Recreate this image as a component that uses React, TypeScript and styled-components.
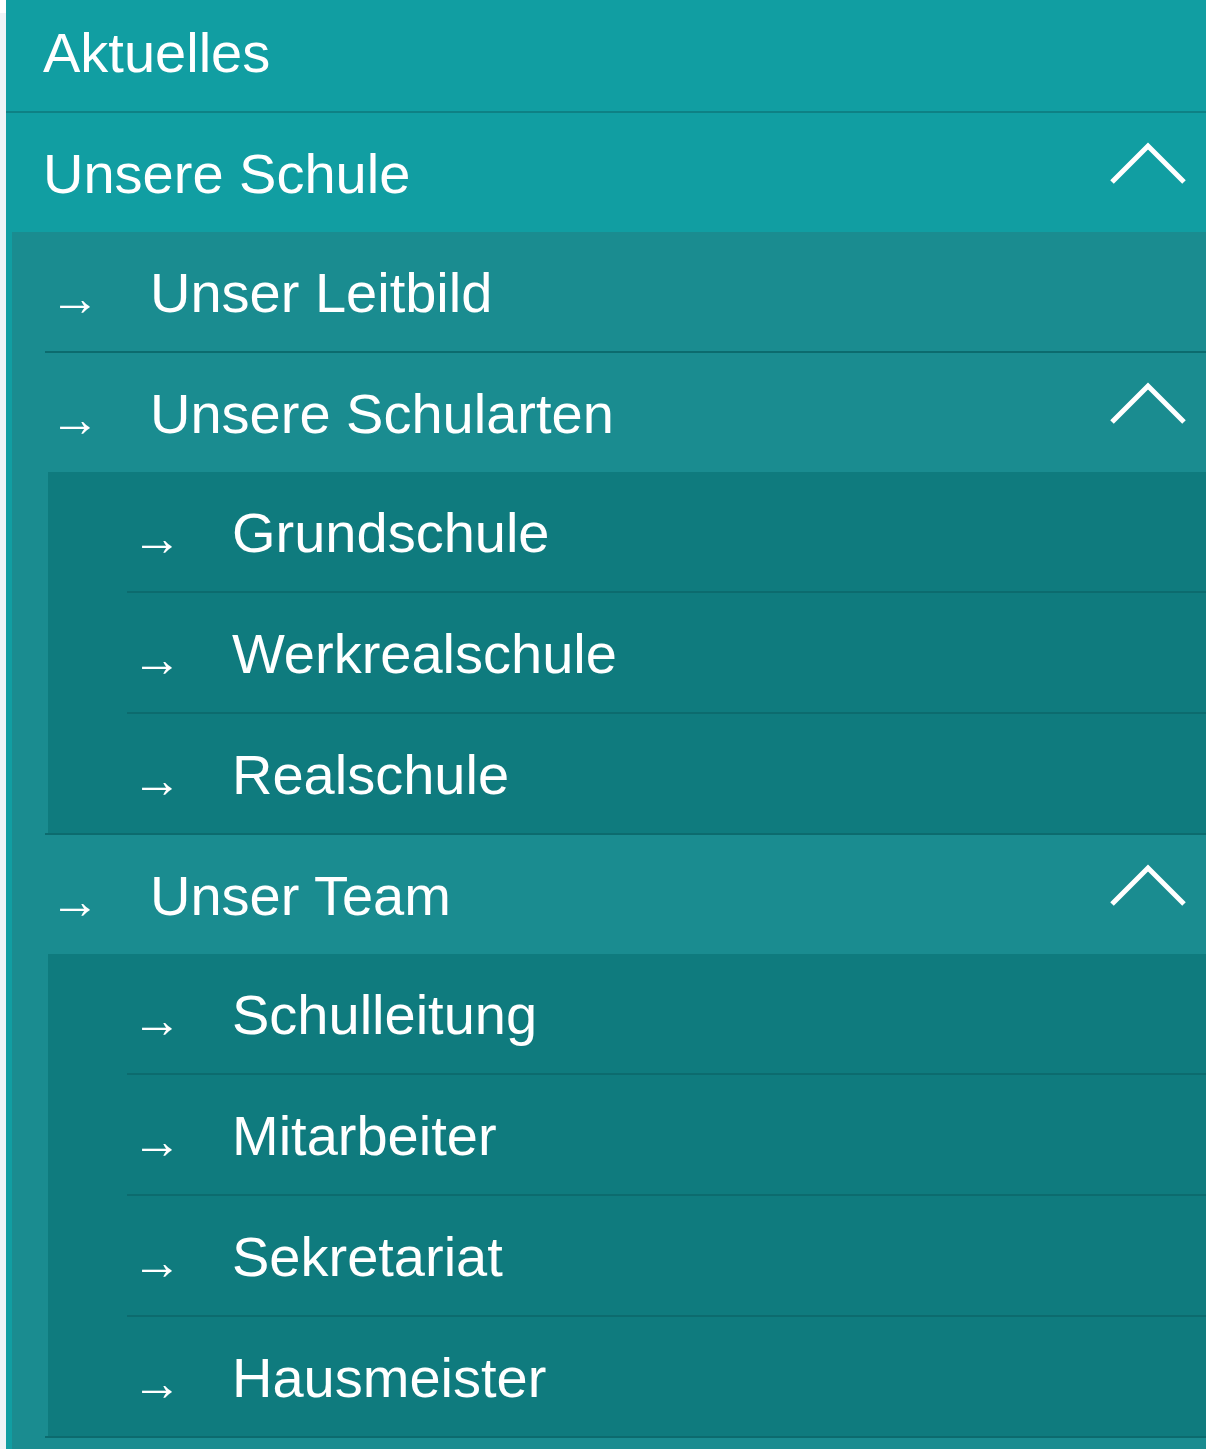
import React from "react";
import styled, { createGlobalStyle } from "styled-components";

const GlobalStyle = createGlobalStyle`
  html, body {
    margin: 0;
    padding: 0;
  }
  body {
    background: linear-gradient(#ffffff 0, #ffffff 13px, #eef4f7 13px);
    font-family: "Liberation Sans", Arial, sans-serif;
    overflow: hidden;
  }
`;

const Page = styled.div`
  width: 1206px;
  height: 1449px;
  overflow: hidden;
  padding-left: 6px;
  box-sizing: border-box;
`;

const Menu = styled.ul`
  list-style: none;
  margin: -8px 0 0 0;
  padding: 0;
  background: #119ea2;
`;

const TopItem = styled.li<{ $border?: boolean }>`
  border-bottom: ${(p) => (p.$border ? "2px solid #0e8185" : "none")};
`;

const SubList = styled.ul<{ $level: number }>`
  list-style: none;
  margin: 0 0 0 ${(p) => (p.$level === 2 ? "6px" : "3px")};
  padding: 0 0 ${(p) => (p.$level === 2 ? "40px" : "0")} 0;
  background: ${(p) => (p.$level === 2 ? "#1a8c90" : "#0f7b7e")};
`;

const SubItem = styled.li<{ $level: number; $border: boolean }>`
  margin-left: ${(p) => (p.$level === 2 ? "33px" : "79px")};
  border-bottom: ${(p) => (p.$border ? "2px solid #0c6b6e" : "none")};
`;

const Row = styled.a<{ $pad: number }>`
  display: flex;
  align-items: center;
  height: 119px;
  box-sizing: border-box;
  padding: 3px 17px 0 ${(p) => p.$pad}px;
  color: #ffffff;
  font-size: 56px;
  line-height: 1;
  text-decoration: none;
  cursor: pointer;
`;

const Arrow = styled.span`
  flex: 0 0 100px;
  font-size: 50px;
  padding-top: 10px;
  margin-left: -7px;
  font-family: "Liberation Sans", Arial, sans-serif;
`;

const Label = styled.span`
  flex: 1 1 auto;
  white-space: nowrap;
`;

const Chevron = styled.svg`
  flex: 0 0 auto;
  width: 80px;
  height: 42px;
  margin-bottom: 20px;
  overflow: visible;
`;

const Up = () => (
  <Chevron viewBox="0 0 80 42">
    <polyline
      points="3,39 39,3 75,39"
      fill="none"
      stroke="#ffffff"
      strokeWidth="5"
      strokeLinecap="butt"
      strokeLinejoin="miter"
    />
  </Chevron>
);

type Node = { label: string; children?: Node[] };

const data: Node[] = [
  { label: "Unser Leitbild" },
  {
    label: "Unsere Schularten",
    children: [
      { label: "Grundschule" },
      { label: "Werkrealschule" },
      { label: "Realschule" },
    ],
  },
  {
    label: "Unser Team",
    children: [
      { label: "Schulleitung" },
      { label: "Mitarbeiter" },
      { label: "Sekretariat" },
      { label: "Hausmeister" },
    ],
  },
];

const Level3 = ({ items }: { items: Node[] }) => (
  <SubList $level={3}>
    {items.map((n, i) => (
      <SubItem key={n.label} $level={3} $border={i < items.length - 1}>
        <Row $pad={12}>
          <Arrow>→</Arrow>
          <Label>{n.label}</Label>
        </Row>
      </SubItem>
    ))}
  </SubList>
);

export default function App() {
  return (
    <>
      <GlobalStyle />
      <Page>
        <Menu>
          <TopItem $border>
            <Row $pad={37}>
              <Label>Aktuelles</Label>
            </Row>
          </TopItem>
          <TopItem>
            <Row $pad={37}>
              <Label>Unsere Schule</Label>
              <Up />
            </Row>
            <SubList $level={2}>
              {data.map((n) => (
                <SubItem key={n.label} $level={2} $border>
                  <Row $pad={12}>
                    <Arrow>→</Arrow>
                    <Label>{n.label}</Label>
                    {n.children && <Up />}
                  </Row>
                  {n.children && <Level3 items={n.children} />}
                </SubItem>
              ))}
            </SubList>
          </TopItem>
        </Menu>
      </Page>
    </>
  );
}
